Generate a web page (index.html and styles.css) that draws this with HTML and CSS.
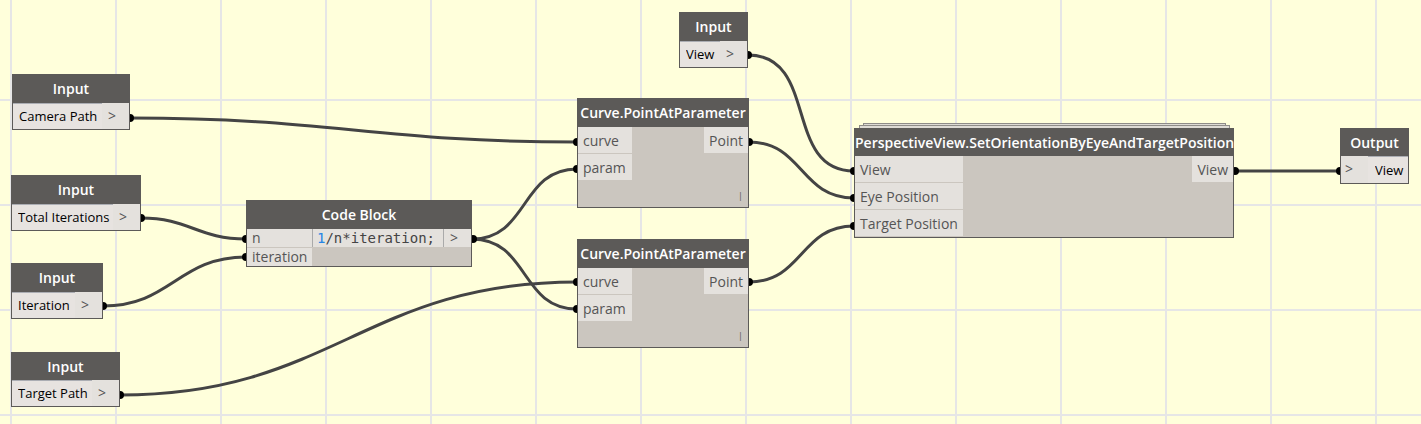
FILE: index.html
```html
<!DOCTYPE html>
<html lang="en">
<head>
<meta charset="utf-8">
<title>Camera path graph</title>
<link rel="stylesheet" href="styles.css">
</head>
<body>
<main class="canvas">
  <svg class="wires" aria-hidden="true">
    <g class="wire">
      <path d="M130 118C331 118 376 142 577 142"/>
      <path d="M141 218C189 218 198 239 246 239"/>
      <path d="M103 306C171 306 178 257 246 257"/>
      <path d="M120 395C332 395 365 282 577 282"/>
      <path d="M472 239C529 239 520 169 577 169"/>
      <path d="M472 239C529 239 520 309 577 309"/>
      <path d="M748 55C819 55 783 171 854 171"/>
      <path d="M749 142C803 142 800 198 854 198"/>
      <path d="M749 282C803 282 800 226 854 226"/>
      <path d="M1234 171H1340"/>
    </g>
    <g class="ends">
      <circle cx="130" cy="118" r="4"/><circle cx="141" cy="218" r="4"/>
      <circle cx="103" cy="306" r="4"/><circle cx="120" cy="395" r="4"/>
      <circle cx="246" cy="239" r="4"/><circle cx="246" cy="257" r="4"/>
      <circle cx="473" cy="239" r="4"/><circle cx="748" cy="55" r="4"/>
      <circle cx="577" cy="142" r="4"/><circle cx="577" cy="169" r="4"/>
      <circle cx="577" cy="282" r="4"/><circle cx="577" cy="309" r="4"/>
      <circle cx="749" cy="142" r="4"/><circle cx="749" cy="282" r="4"/>
      <circle cx="854" cy="171" r="4"/><circle cx="854" cy="198" r="4"/>
      <circle cx="854" cy="226" r="4"/><circle cx="1235" cy="171" r="4"/>
      <circle cx="1340" cy="171" r="4"/>
    </g>
  </svg>

  <section class="node io camera">
    <h2 class="title">Input</h2>
    <div class="row"><input class="field" type="text" value="Camera Path" aria-label="Camera path input name"><span class="arrow">&gt;</span></div>
  </section>
  <section class="node io total">
    <h2 class="title">Input</h2>
    <div class="row"><input class="field" type="text" value="Total Iterations" aria-label="Total iterations input name"><span class="arrow">&gt;</span></div>
  </section>
  <section class="node io iteration">
    <h2 class="title">Input</h2>
    <div class="row"><input class="field" type="text" value="Iteration" aria-label="Iteration input name"><span class="arrow">&gt;</span></div>
  </section>
  <section class="node io target">
    <h2 class="title">Input</h2>
    <div class="row"><input class="field" type="text" value="Target Path" aria-label="Target path input name"><span class="arrow">&gt;</span></div>
  </section>
  <section class="node io view">
    <h2 class="title">Input</h2>
    <div class="row"><input class="field" type="text" value="View" aria-label="View input name"><span class="arrow">&gt;</span></div>
  </section>

  <section class="node code">
    <h2 class="title">Code Block</h2>
    <div class="body">
      <div class="ports"><span class="port">n</span><span class="port">iteration</span></div>
      <div class="editor"><code class="source"><span class="number">1</span>/n*iteration;</code><span class="arrow">&gt;</span></div>
    </div>
  </section>

  <section class="node curve upper">
    <h2 class="title">Curve.PointAtParameter</h2>
    <div class="body">
      <div class="ports"><span class="port">curve</span><span class="port">param</span></div>
      <div class="ports"><span class="port">Point</span></div>
    </div>
    <div class="lacing">|</div>
  </section>
  <section class="node curve lower">
    <h2 class="title">Curve.PointAtParameter</h2>
    <div class="body">
      <div class="ports"><span class="port">curve</span><span class="port">param</span></div>
      <div class="ports"><span class="port">Point</span></div>
    </div>
    <div class="lacing">|</div>
  </section>

  <div class="sheet back"></div>
  <div class="sheet front"></div>
  <section class="node perspective">
    <h2 class="title">PerspectiveView.SetOrientationByEyeAndTargetPosition</h2>
    <div class="body">
      <div class="ports"><span class="port">View</span><span class="port">Eye Position</span><span class="port">Target Position</span></div>
      <div class="ports"><span class="port">View</span></div>
    </div>
  </section>

  <section class="node io output">
    <h2 class="title">Output</h2>
    <div class="row"><span class="arrow">&gt;</span><input class="field" type="text" value="View" aria-label="View output name"></div>
  </section>
</main>
</body>
</html>
```
FILE: styles.css
```css
* { box-sizing: border-box; }

body {
  margin: 0;
  font-family: "Open Sans", sans-serif;
}

.canvas {
  position: relative;
  min-height: 100vh;
  overflow: hidden;
  background-color: #ffffdb;
  background-image:
    linear-gradient(to right, #e6e6e6 2px, transparent 2px),
    linear-gradient(to bottom, #e6e6e6 2px, transparent 2px);
  background-size: 105px 105px;
  background-position: 10px 99px;
}

.wires {
  position: absolute;
  inset: 0;
  width: 100%;
  height: 100%;
}
.wire { fill: none; stroke: #444; stroke-width: 3; }
.ends { fill: #000; }

/* Nodes sit freely on the canvas */
.node {
  position: absolute;
  border: 1px solid #5c5a58;
  background: #cbc6bf;
  color: #555;
  font-size: 14px;
}
.camera { left: 12px; top: 74px; width: 118px; }
.total { left: 11px; top: 175px; width: 130px; }
.iteration { left: 11px; top: 263px; width: 92px; }
.target { left: 11px; top: 352px; width: 109px; }
.view { left: 679px; top: 12px; width: 69px; }
.output { left: 1340px; top: 128px; width: 69px; }
.code { left: 246px; top: 200px; width: 226px; }
.upper { left: 577px; top: 98px; }
.lower { left: 577px; top: 239px; }
.curve { width: 172px; height: 110px; }
.perspective { left: 854px; top: 128px; width: 380px; height: 110px; }

.title {
  margin: 0;
  height: 28px;
  background: #5c5a58;
  color: #fff;
  font-size: 14px;
  font-weight: 600;
  line-height: 28px;
  text-align: center;
  white-space: nowrap;
}
.perspective .title, .target .title, .output .title { height: 27px; }

.row { display: flex; height: 26px; background: #e4e1dd; }
.output .row { height: 27px; }
.field {
  flex: 1;
  min-width: 0;
  padding: 0 0 2px 6px;
  border: 0;
  border-top: 1px solid #abadb3;
  background: #e7e3e0;
  color: #000;
  font: 13px "Open Sans", sans-serif;
}
.output .field { padding-bottom: 0; padding-left: 7px; }
.arrow {
  width: 27px;
  padding-left: 6px;
  line-height: 26px;
}
.output .arrow { padding-left: 4px; }

.body { display: flex; justify-content: space-between; align-items: flex-start; }
.ports { display: flex; flex-direction: column; gap: 1px; }
.port {
  height: 26px;
  padding: 0 5px;
  background: #e4e1dd;
  line-height: 28px;
  white-space: nowrap;
}
.curve .ports:first-child { width: 54px; }
.lacing {
  position: absolute;
  right: 5px;
  bottom: 3px;
  font-size: 9px;
  line-height: 16px;
}
.lower { height: 109px; }

.code .ports { width: 65px; }
.code .port { height: 18px; line-height: 18px; }
.editor { display: flex; flex: 1; background: #e4e1dd; }
.source {
  flex: 1;
  padding-left: 4px;
  border-left: 1px solid #aaa;
  border-right: 1px solid #aaa;
  color: #444;
  font: 14px/18px "DejaVu Sans Mono", monospace;
}
.number { color: #2585e5; }
.code .arrow { line-height: 18px; }

/* Stacked outlines behind a node with a custom definition */
.sheet {
  position: absolute;
  height: 10px;
  border: 1px solid #8e8c88;
  background: #dedbd5;
}
.back { left: 863px; top: 123px; width: 363px; }
.front { left: 859px; top: 125px; width: 371px; }
```
